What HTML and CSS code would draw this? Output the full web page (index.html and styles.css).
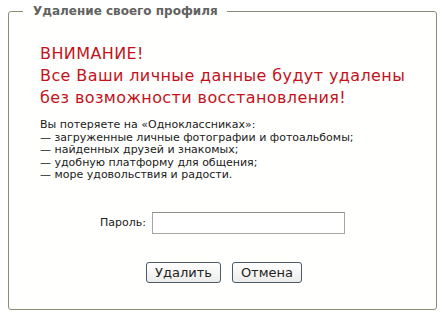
FILE: index.html
```html
<!DOCTYPE html>
<html lang="ru">
<head>
<meta charset="utf-8">
<link rel="stylesheet" href="styles.css">
</head>
<body>
<fieldset class="panel">
  <legend class="panel-title">Удаление своего профиля</legend>
  <div class="panel-body">
    <div class="warning">
      <div>ВНИМАНИЕ!</div>
      <div>Все Ваши личные данные будут удалены</div>
      <div>без возможности восстановления!</div>
    </div>
    <div class="losses">
      <div>Вы потеряете на «Одноклассниках»:</div>
      <div>— загруженные личные фотографии и фотоальбомы;</div>
      <div>— найденных друзей и знакомых;</div>
      <div>— удобную платформу для общения;</div>
      <div>— море удовольствия и радости.</div>
    </div>
    <div class="password-row">
      <label class="password-label" for="pw">Пароль:</label>
      <input class="password-input" id="pw" type="password">
    </div>
    <div class="actions">
      <button class="btn" type="button">Удалить</button>
      <button class="btn" type="button">Отмена</button>
    </div>
  </div>
</fieldset>
</body>
</html>
```

FILE: styles.css
```css
html, body {
  margin: 0;
  padding: 0;
  background: #ffffff;
}
body {
  padding: 4px 9px 0 8px;
  font-family: "DejaVu Sans", Verdana, sans-serif;
}
.panel {
  margin: 0;
  box-sizing: border-box;
  width: 429px;
  height: 306px;
  border: 1px solid #8c8c74;
  border-radius: 3px;
  padding: 0;
  background: #fffffd;
}
.panel-title {
  margin-left: 14px;
  padding: 0 9px 0 10px;
  font-size: 12px;
  font-weight: bold;
  color: #626260;
  line-height: 14px;
}
.panel-body {
  padding-left: 31px;
}
.warning {
  margin-top: 25px;
  color: #c4121c;
  font-size: 16px;
  line-height: 22px;
  letter-spacing: 0.4px;
}
.losses {
  margin-top: 10px;
  color: #1a1a1a;
  font-size: 11px;
  line-height: 12.5px;
}
.password-row {
  margin-top: 30px;
  display: flex;
  align-items: center;
  padding-left: 60px;
  gap: 6px;
}
.password-label {
  font-size: 11px;
  color: #1a1a1a;
}
.password-input {
  box-sizing: border-box;
  width: 193px;
  height: 22px;
  margin: 0;
  border: 1px solid #a5a5a5;
  border-top-color: #8f8f8f;
  background: #fff;
}
.actions {
  margin-top: 28px;
  display: flex;
  gap: 11px;
  padding-left: 106px;
}
.btn {
  box-sizing: border-box;
  height: 21px;
  padding: 0 8px;
  font-family: "DejaVu Sans", Verdana, sans-serif;
  font-size: 13px;
  color: #222;
  border: 1px solid #4a5a66;
  border-radius: 3px;
  background: linear-gradient(#ffffff, #ececea);
}
```
